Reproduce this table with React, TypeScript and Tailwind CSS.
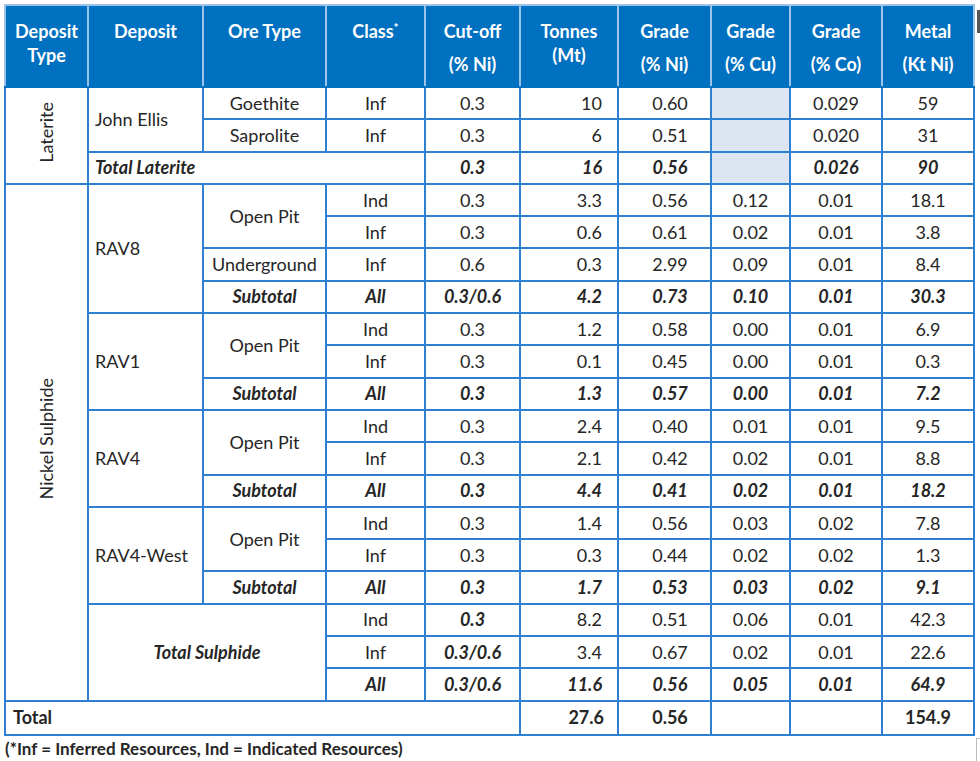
import React from 'react';

const line = 'border-2 border-[#2f80d1]';
const cellBase = `${line} h-[32.3px] p-0 align-middle`;

type V = { v: string; bi?: boolean };

function Num({ v, bi, className = '' }: V & { className?: string }) {
  return (
    <td className={`${cellBase} ${bi ? 'font-bold italic' : ''} ${className}`}>{v}</td>
  );
}

// class, cutoff, tonnes, %Ni, %Cu, %Co, metal
function Values({ row, bi = false }: { row: (string | V)[]; bi?: boolean }) {
  const cells = row.map(c => (typeof c === 'string' ? { v: c, bi } : c));
  const align = [
    'text-center',
    'text-center',
    'text-right pr-[15px]',
    'text-center pl-[11px]',
    'text-center',
    'text-center',
    'text-center',
  ];
  return (
    <>
      {cells.map((c, i) => (
        <Num key={i} v={c.v} bi={c.bi} className={align[i]} />
      ))}
    </>
  );
}

function HeadCell({ a, b, tight }: { a: React.ReactNode; b?: string; tight?: boolean }) {
  return (
    <th className="bg-[#0070c0] text-white font-bold text-center align-top p-0 pt-[13px] border-2 border-[#9cc3ea] border-b-[#0070c0]">
      <div className="leading-[24px]">{a}</div>
      {b && <div className={`leading-[24px] ${tight ? 'mt-0' : 'mt-[9px]'}`}>{b}</div>}
    </th>
  );
}

const shade = 'bg-[#dce6f1]';

export default function App() {
  return (
    <div className="relative w-[980px] h-[761px] bg-white text-[#262626] font-['Lato',sans-serif] text-[18px]">
      <div className="pt-[4px] pl-[4px]">
        <table className="table-fixed border-collapse w-[971px]">
          <colgroup>
            <col className="w-[83px]" />
            <col className="w-[115px]" />
            <col className="w-[123px]" />
            <col className="w-[99px]" />
            <col className="w-[95px]" />
            <col className="w-[98px]" />
            <col className="w-[93px]" />
            <col className="w-[79px]" />
            <col className="w-[92px]" />
            <col className="w-[92px]" />
          </colgroup>
          <thead>
            <tr className="h-[82px]">
              <HeadCell a="Deposit" b="Type" tight />
              <HeadCell a="Deposit" />
              <HeadCell a="Ore Type" />
              <HeadCell
                a={
                  <>
                    Class<span className="relative -top-[6px] text-[12px]">*</span>
                  </>
                }
              />
              <HeadCell a="Cut-off" b="(% Ni)" />
              <HeadCell a="Tonnes" b="(Mt)" tight />
              <HeadCell a="Grade" b="(% Ni)" />
              <HeadCell a="Grade" b="(% Cu)" />
              <HeadCell a="Grade" b="(% Co)" />
              <HeadCell a="Metal" b="(Kt Ni)" />
            </tr>
          </thead>
          <tbody>
            {/* Laterite */}
            <tr>
              <td rowSpan={3} className={`${cellBase} text-center`}>
                <span className="inline-block [writing-mode:vertical-rl] rotate-180">Laterite</span>
              </td>
              <td rowSpan={2} className={`${cellBase} text-left pl-[6px]`}>John Ellis</td>
              <td className={`${cellBase} text-center`}>Goethite</td>
              <Num v="Inf" className="text-center" />
              <Num v="0.3" className="text-center" />
              <Num v="10" className="text-right pr-[15px]" />
              <Num v="0.60" className="text-center pl-[11px]" />
              <Num v="" className={shade} />
              <Num v="0.029" className="text-center" />
              <Num v="59" className="text-center" />
            </tr>
            <tr>
              <td className={`${cellBase} text-center`}>Saprolite</td>
              <Num v="Inf" className="text-center" />
              <Num v="0.3" className="text-center" />
              <Num v="6" className="text-right pr-[15px]" />
              <Num v="0.51" className="text-center pl-[11px]" />
              <Num v="" className={shade} />
              <Num v="0.020" className="text-center" />
              <Num v="31" className="text-center" />
            </tr>
            <tr>
              <td colSpan={3} className={`${cellBase} text-left pl-[6px] font-bold italic`}>Total Laterite</td>
              <Num v="0.3" bi className="text-center" />
              <Num v="16" bi className="text-right pr-[15px]" />
              <Num v="0.56" bi className="text-center pl-[11px]" />
              <Num v="" className={shade} />
              <Num v="0.026" bi className="text-center" />
              <Num v="90" bi className="text-center" />
            </tr>

            {/* RAV8 */}
            <tr>
              <td rowSpan={16} className={`${cellBase} text-center`}>
                <span className="inline-block [writing-mode:vertical-rl] rotate-180">Nickel Sulphide</span>
              </td>
              <td rowSpan={4} className={`${cellBase} text-left pl-[6px]`}>RAV8</td>
              <td rowSpan={2} className={`${cellBase} text-center`}>Open Pit</td>
              <Values row={['Ind', '0.3', '3.3', '0.56', '0.12', '0.01', '18.1']} />
            </tr>
            <tr>
              <Values row={['Inf', '0.3', '0.6', '0.61', '0.02', '0.01', '3.8']} />
            </tr>
            <tr>
              <td className={`${cellBase} text-center`}>Underground</td>
              <Values row={['Inf', '0.6', '0.3', '2.99', '0.09', '0.01', '8.4']} />
            </tr>
            <tr>
              <td className={`${cellBase} text-center font-bold italic`}>Subtotal</td>
              <Values bi row={['All', '0.3/0.6', '4.2', '0.73', '0.10', '0.01', '30.3']} />
            </tr>

            {/* RAV1 */}
            <tr>
              <td rowSpan={3} className={`${cellBase} text-left pl-[6px]`}>RAV1</td>
              <td rowSpan={2} className={`${cellBase} text-center`}>Open Pit</td>
              <Values row={['Ind', '0.3', '1.2', '0.58', '0.00', '0.01', '6.9']} />
            </tr>
            <tr>
              <Values row={['Inf', '0.3', '0.1', '0.45', '0.00', '0.01', '0.3']} />
            </tr>
            <tr>
              <td className={`${cellBase} text-center font-bold italic`}>Subtotal</td>
              <Values bi row={['All', '0.3', '1.3', '0.57', '0.00', '0.01', '7.2']} />
            </tr>

            {/* RAV4 */}
            <tr>
              <td rowSpan={3} className={`${cellBase} text-left pl-[6px]`}>RAV4</td>
              <td rowSpan={2} className={`${cellBase} text-center`}>Open Pit</td>
              <Values row={['Ind', '0.3', '2.4', '0.40', '0.01', '0.01', '9.5']} />
            </tr>
            <tr>
              <Values row={['Inf', '0.3', '2.1', '0.42', '0.02', '0.01', '8.8']} />
            </tr>
            <tr>
              <td className={`${cellBase} text-center font-bold italic`}>Subtotal</td>
              <Values bi row={['All', '0.3', '4.4', '0.41', '0.02', '0.01', '18.2']} />
            </tr>

            {/* RAV4-West */}
            <tr>
              <td rowSpan={3} className={`${cellBase} text-left pl-[6px]`}>RAV4-West</td>
              <td rowSpan={2} className={`${cellBase} text-center`}>Open Pit</td>
              <Values row={['Ind', '0.3', '1.4', '0.56', '0.03', '0.02', '7.8']} />
            </tr>
            <tr>
              <Values row={['Inf', '0.3', '0.3', '0.44', '0.02', '0.02', '1.3']} />
            </tr>
            <tr>
              <td className={`${cellBase} text-center font-bold italic`}>Subtotal</td>
              <Values bi row={['All', '0.3', '1.7', '0.53', '0.03', '0.02', '9.1']} />
            </tr>

            {/* Total Sulphide */}
            <tr>
              <td rowSpan={3} colSpan={2} className={`${cellBase} text-center font-bold italic`}>Total Sulphide</td>
              <Values row={['Ind', { v: '0.3', bi: true }, '8.2', '0.51', '0.06', '0.01', '42.3']} />
            </tr>
            <tr>
              <Values row={['Inf', { v: '0.3/0.6', bi: true }, '3.4', '0.67', '0.02', '0.01', '22.6']} />
            </tr>
            <tr>
              <Values bi row={['All', '0.3/0.6', '11.6', '0.56', '0.05', '0.01', '64.9']} />
            </tr>

            {/* Grand total */}
            <tr>
              <td colSpan={5} className={`${line} h-[34px] p-0 text-left pl-[7px] font-bold`}>Total</td>
              <td className={`${line} h-[34px] p-0 text-right pr-[13px] font-bold`}>27.6</td>
              <td className={`${line} h-[34px] p-0 text-center pl-[11px] font-bold`}>0.56</td>
              <td className={`${line} h-[34px] p-0`}></td>
              <td className={`${line} h-[34px] p-0`}></td>
              <td className={`${line} h-[34px] p-0 text-center font-bold`}>154.9</td>
            </tr>
          </tbody>
        </table>
        <p className="mt-[3px] pl-[1px] text-[17px] leading-[20px] font-bold">
          (*Inf = Inferred Resources, Ind = Indicated Resources)
        </p>
      </div>

      {/* window edge marks */}
      <div className="absolute left-[977px] top-[10px] w-[3px] h-[23px] bg-[#555]" />
      <div className="absolute left-[976px] top-[738px] w-[1px] h-[23px] bg-[#bbb]" />
      <div className="absolute left-[976px] top-[738px] w-[4px] h-[1px] bg-[#bbb]" />
    </div>
  );
}
